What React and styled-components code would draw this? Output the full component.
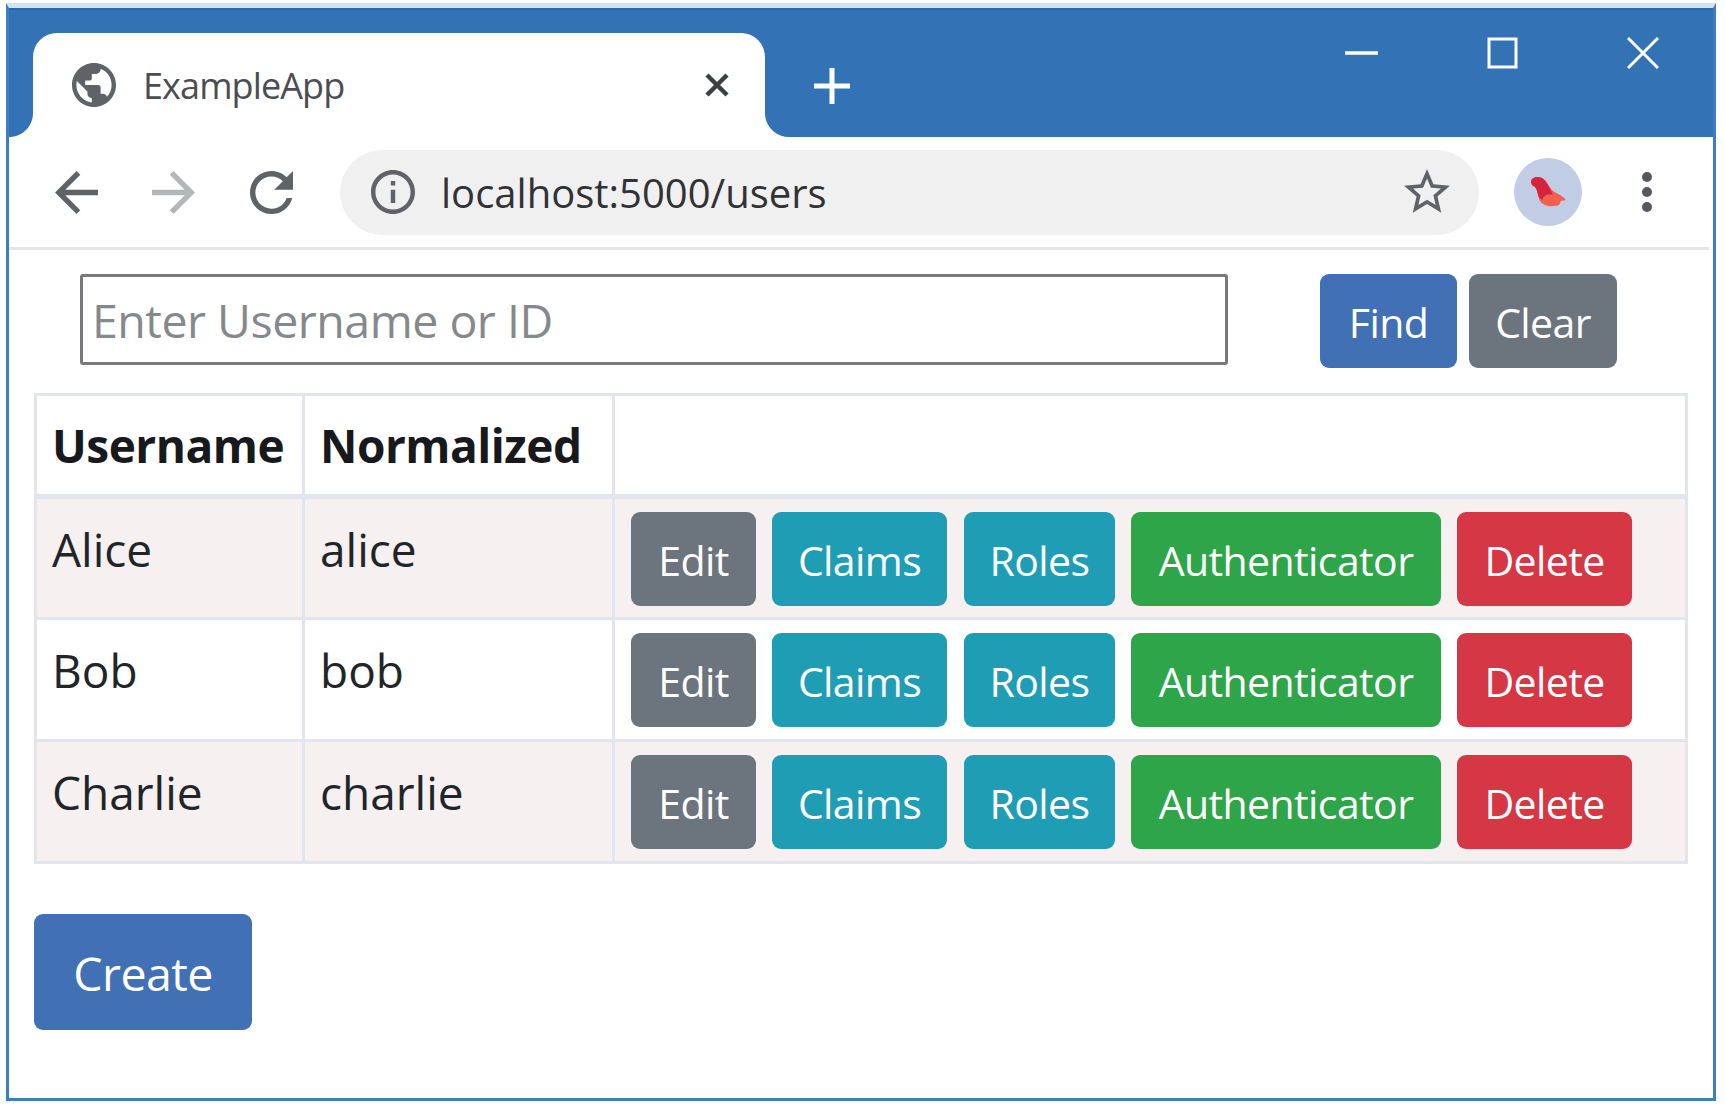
import React from "react";
import styled, { createGlobalStyle } from "styled-components";

const GlobalStyle = createGlobalStyle`
	html, body {
		margin: 0;
		padding: 0;
		background: #fff;
	}

	* {
		box-sizing: border-box;
	}
`;

const font = `"Open Sans", "Noto Sans", sans-serif`;
const chromeBlue = "#3272b5";
const lineColor = "#e2e4ee";

const Window = styled.div`
	width: 1710px;
	height: 1098px;
	margin: 3px 0 0 6px;
	border: 3px solid #3a7fc4;
	border-top: 5px solid #d3e2ef;
	font-family: ${font};
	color: #212529;
`;

const TitleBar = styled.div`
	display: flex;
	height: 129px;
	padding-top: 23px;
	background: ${chromeBlue};
	border-top: 2px solid #2a68ad;
`;

const Tab = styled.div`
	position: relative;
	display: flex;
	align-items: center;
	width: 732px;
	height: 104px;
	margin-left: 24px;
	padding: 0 35px 0 39px;
	background: #fff;
	border-radius: 24px 24px 0 0;

	&::before,
	&::after {
		content: "";
		position: absolute;
		bottom: 0;
		width: 24px;
		height: 24px;
	}

	&::before {
		left: -24px;
		background: radial-gradient(circle at 0 0, ${chromeBlue} 23.5px, #fff 24.5px);
	}

	&::after {
		right: -24px;
		background: radial-gradient(circle at 100% 0, ${chromeBlue} 23.5px, #fff 24.5px);
	}
`;

const TabTitle = styled.span`
	flex: 1;
	margin-left: 27px;
	font-size: 36px;
	letter-spacing: -0.9px;
	color: #4a4d51;
`;

const NewTab = styled.svg`
	width: 38px;
	height: 38px;
	margin: 34px 0 0 48px;
`;

const WindowControls = styled.div`
	display: flex;
	align-items: center;
	gap: 109px;
	height: 32px;
	margin: 4px 0 0 auto;
	padding-right: 54px;
`;

const Toolbar = styled.div`
	display: flex;
	align-items: center;
	height: 113px;
	padding: 0 0 0 46px;
	margin-right: 4px;
	border-bottom: 3px solid #e4e5e9;
`;

const ToolIcon = styled.svg`
	flex: none;
	width: ${(p) => p.$size || 43}px;
	height: ${(p) => p.$size || 43}px;
	margin-left: ${(p) => p.$gap || 0}px;
	fill: ${(p) => p.$color || "#5f6368"};
`;

const Omnibox = styled.div`
	display: flex;
	align-items: center;
	width: 1139px;
	height: 85px;
	margin-left: 47px;
	padding: 0 29px 0 31px;
	background: #f0f0f1;
	border-radius: 43px;
`;

const Url = styled.span`
	flex: 1;
	margin-left: 26px;
	font-size: 40px;
	color: #303336;
`;

const Avatar = styled.div`
	display: flex;
	align-items: center;
	justify-content: center;
	flex: none;
	width: 68px;
	height: 68px;
	margin-left: 35px;
	background: #c1cde5;
	border-radius: 50%;
`;

const Dots = styled.div`
	display: flex;
	flex-direction: column;
	gap: 5px;
	margin-left: 60px;

	span {
		width: 10px;
		height: 10px;
		background: #55585c;
		border-radius: 50%;
	}
`;

const Content = styled.div`
	padding: 24px 0 0 25px;
`;

const SearchRow = styled.div`
	display: flex;
	align-items: flex-start;
	padding-left: 46px;
`;

const SearchInput = styled.input`
	width: 1148px;
	height: 91px;
	padding: 0 9px;
	font-family: ${font};
	font-size: 46.5px;
	letter-spacing: -0.5px;
	color: #212529;
	background: #fff;
	border: 3px solid #77797c;
	border-radius: 3px;
	outline: none;

	&::placeholder {
		color: #85898d;
		opacity: 1;
	}
`;

const Button = styled.button`
	flex: none;
	width: ${(p) => p.$w}px;
	height: ${(p) => p.$h || 94}px;
	margin-left: ${(p) => p.$gap || 0}px;
	padding: 2px 0 0;
	font-family: ${font};
	font-size: ${(p) => p.$fs || 41}px;
	letter-spacing: -0.6px;
	color: #fff;
	background: ${(p) => p.$bg};
	border: none;
	border-radius: 9px;
`;

const UsersTable = styled.table`
	width: 1654px;
	margin-top: 25px;
	border-collapse: collapse;
	table-layout: fixed;
	border: 3px solid ${lineColor};
`;

const HeadCell = styled.th`
	height: 102px;
	padding: 0 0 0 15px;
	font-size: 46px;
	font-weight: 700;
	letter-spacing: -0.5px;
	text-align: left;
	color: #17191c;
	border: 3px solid ${lineColor};
	border-bottom-width: 5px;
`;

const Cell = styled.td`
	height: 122px;
	padding: ${(p) => (p.$actions ? "13px 0 0 16px" : "20px 0 0 15px")};
	vertical-align: top;
	font-size: 46px;
	line-height: 60px;
	background: ${(p) => (p.$striped ? "#f6f0f0" : "#fff")};
	border: 3px solid ${lineColor};
`;

const ActionBar = styled.div`
	display: flex;
`;

const CreateButton = styled(Button)`
	display: block;
	margin-top: 50px;
`;

const users = [
	{ name: "Alice", normalized: "alice" },
	{ name: "Bob", normalized: "bob" },
	{ name: "Charlie", normalized: "charlie" },
];

const actions = [
	{ label: "Edit", w: 125, gap: 0, bg: "#6c757d" },
	{ label: "Claims", w: 175, gap: 16, bg: "#1f9db5" },
	{ label: "Roles", w: 151, gap: 17, bg: "#1f9db5" },
	{ label: "Authenticator", w: 310, gap: 16, bg: "#2fa54a" },
	{ label: "Delete", w: 175, gap: 16, bg: "#d63745" },
];

const App = () => {
	return (
		<>
			<GlobalStyle />
			<Window>
				<TitleBar>
					<Tab>
						<ToolIcon $size={44} viewBox="2 2 20 20">
							<path d="M12 2C6.48 2 2 6.48 2 12s4.48 10 10 10 10-4.48 10-10S17.52 2 12 2zm-1 17.93c-3.95-.49-7-3.85-7-7.93 0-.62.08-1.21.21-1.79L9 15v1c0 1.1.9 2 2 2v1.93zm6.9-2.54c-.26-.81-1-1.39-1.9-1.39h-1v-3c0-.55-.45-1-1-1H8v-2h2c.55 0 1-.45 1-1V7h2c1.1 0 2-.9 2-2v-.41c2.93 1.19 5 4.06 5 7.41 0 2.08-.8 3.97-2.1 5.39z" />
						</ToolIcon>
						<TabTitle>ExampleApp</TabTitle>
						<svg width="26" height="26" viewBox="0 0 26 26">
							<path d="M3 3L23 23M23 3L3 23" stroke="#3c4043" strokeWidth="4.5" fill="none" />
						</svg>
					</Tab>
					<NewTab viewBox="0 0 38 38">
						<path d="M19 1V37M1 19H37" stroke="#fff" strokeWidth="5" fill="none" />
					</NewTab>
					<WindowControls>
						<svg width="33" height="32" viewBox="0 0 33 32">
							<path d="M0 16H33" stroke="#fff" strokeWidth="3.5" fill="none" />
						</svg>
						<svg width="31" height="32" viewBox="0 0 31 32">
							<rect x="2" y="2" width="27" height="28" stroke="#fff" strokeWidth="3" fill="none" />
						</svg>
						<svg width="32" height="32" viewBox="0 0 32 32">
							<path d="M1 1L31 31M31 1L1 31" stroke="#fff" strokeWidth="3" fill="none" />
						</svg>
					</WindowControls>
				</TitleBar>
				<Toolbar>
					<ToolIcon viewBox="4 4 16 16">
						<path d="M20 11H7.83l5.59-5.59L12 4l-8 8 8 8 1.41-1.41L7.83 13H20v-2z" />
					</ToolIcon>
					<ToolIcon $gap={54} $color="#b4b6b9" viewBox="4 4 16 16">
						<path d="M12 4l-1.41 1.41L16.17 11H4v2h12.17l-5.58 5.59L12 20l8-8z" />
					</ToolIcon>
					<ToolIcon $gap={55} viewBox="4 4 16 16">
						<path d="M17.65 6.35C16.2 4.9 14.21 4 12 4c-4.42 0-7.99 3.58-7.99 8s3.57 8 7.99 8c3.73 0 6.84-2.55 7.73-6h-2.08c-.82 2.33-3.04 4-5.65 4-3.31 0-6-2.69-6-6s2.69-6 6-6c1.66 0 3.14.69 4.22 1.78L13 11h7V4l-2.35 2.35z" />
					</ToolIcon>
					<Omnibox>
						<ToolIcon $size={44} viewBox="2 2 20 20">
							<path d="M11 7h2v2h-2zm0 4h2v6h-2zm1-9C6.48 2 2 6.48 2 12s4.48 10 10 10 10-4.48 10-10S17.52 2 12 2zm0 18c-4.41 0-8-3.59-8-8s3.59-8 8-8 8 3.59 8 8-3.59 8-8 8z" />
						</ToolIcon>
						<Url>localhost:5000/users</Url>
						<ToolIcon $size={46} viewBox="2 2 20 20">
							<path d="M22 9.24l-7.19-.62L12 2 9.19 8.63 2 9.24l5.46 4.73L5.82 21 12 17.27 18.18 21l-1.63-7.03L22 9.24zM12 15.4l-3.76 2.27 1-4.28-3.32-2.88 4.38-.38L12 6.1l1.71 4.04 4.38.38-3.32 2.88 1 4.28L12 15.4z" />
						</ToolIcon>
					</Omnibox>
					<Avatar>
						<svg width="38" height="32" viewBox="0 0 38 32">
							<path d="M2 5C3 1 9 0 13 2C18 5 20 11 24 15C28 18 33 19 37 24L32 25L30 29C24 31 15 31 11 25C8 20 9 14 6 11C3 10 2 8 2 5Z" fill="#f2604f" />
							<path d="M2 5C3 1 9 0 13 2C18 5 20 11 24 19C19 17 15 19 13 24C8 20 9 14 6 11C3 10 2 8 2 5Z" fill="#d5233c" />
						</svg>
					</Avatar>
					<Dots>
						<span />
						<span />
						<span />
					</Dots>
				</Toolbar>
				<Content>
					<SearchRow>
						<SearchInput placeholder="Enter Username or ID" />
						<Button $w={137} $gap={92} $bg="#4170b5">
							Find
						</Button>
						<Button $w={148} $gap={12} $bg="#6c757d">
							Clear
						</Button>
					</SearchRow>
					<UsersTable>
						<colgroup>
							<col width="268" />
							<col width="310" />
							<col />
						</colgroup>
						<thead>
							<tr>
								<HeadCell>Username</HeadCell>
								<HeadCell>Normalized</HeadCell>
								<HeadCell />
							</tr>
						</thead>
						<tbody>
							{users.map((user, i) => (
								<tr key={user.name}>
									<Cell $striped={i % 2 === 0}>{user.name}</Cell>
									<Cell $striped={i % 2 === 0}>{user.normalized}</Cell>
									<Cell $striped={i % 2 === 0} $actions>
										<ActionBar>
											{actions.map((action) => (
												<Button key={action.label} $w={action.w} $gap={action.gap} $bg={action.bg}>
													{action.label}
												</Button>
											))}
										</ActionBar>
									</Cell>
								</tr>
							))}
						</tbody>
					</UsersTable>
					<CreateButton $w={218} $h={116} $fs={46.5} $bg="#4170b5">
						Create
					</CreateButton>
				</Content>
			</Window>
		</>
	);
};

export default App;
